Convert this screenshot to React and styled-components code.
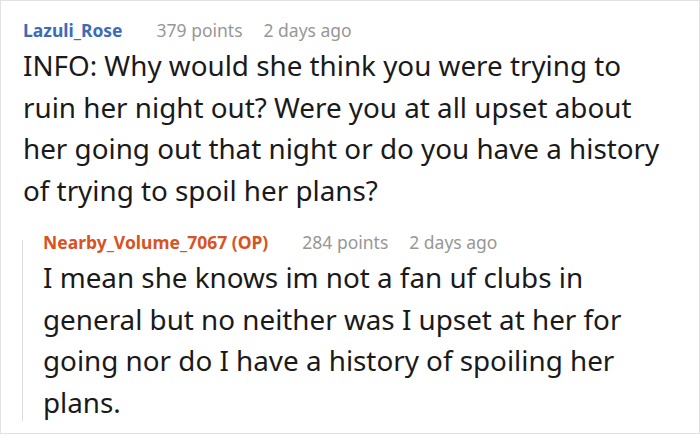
import styled, { createGlobalStyle } from 'styled-components';

const GlobalStyle = createGlobalStyle`
  body {
    margin: 0;
    background: #ffffff;
    font-family: 'Noto Sans', 'Open Sans', sans-serif;
  }
`;

const Card = styled.div`
  box-sizing: border-box;
  width: 700px;
  height: 434px;
  border: 1px solid #e2e2e2;
  padding: 17px 28px 0 22px;
  background: #fff;
  overflow: hidden;
`;

const Header = styled.div`
  display: flex;
  align-items: baseline;
  font-size: 17.5px;
  line-height: 24px;
`;

const Author = styled.span`
  font-weight: 700;
  color: ${(p) => (p.$op ? '#d8531f' : '#3b6cb7')};
  margin-right: 34px;
`;

const Meta = styled.span`
  color: #979797;
  margin-right: 21px;
`;

const Body = styled.p`
  margin: 3px 0 0 0;
  font-size: 27.8px;
  line-height: 41.5px;
  color: #1a1a1a;
`;

const Reply = styled.div`
  position: relative;
  margin-top: 19px;
  padding-left: 20px;
  &::before {
    content: '';
    position: absolute;
    left: -1px;
    top: 10px;
    bottom: 2px;
    width: 1px;
    background: #dcdcdc;
  }
`;

const Comment = ({ author, op, points, time, children }) => (
  <>
    <Header>
      <Author $op={op}>{author}{op ? ' (OP)' : ''}</Author>
      <Meta>{points} points</Meta>
      <Meta>{time}</Meta>
    </Header>
    <Body>{children}</Body>
  </>
);

export default function App() {
  return (
    <>
      <GlobalStyle />
      <Card>
        <Comment author="Lazuli_Rose" points={379} time="2 days ago">
          INFO: Why would she think you were trying to ruin her night out? Were you at all upset about
          her going out that night or do you have a history of trying to spoil her plans?
        </Comment>
        <Reply>
          <Comment author="Nearby_Volume_7067" op points={284} time="2 days ago">
            I mean she knows im not a fan uf clubs in general but no neither was I upset at her for
            going nor do I have a history of spoiling her plans.
          </Comment>
        </Reply>
      </Card>
    </>
  );
}
